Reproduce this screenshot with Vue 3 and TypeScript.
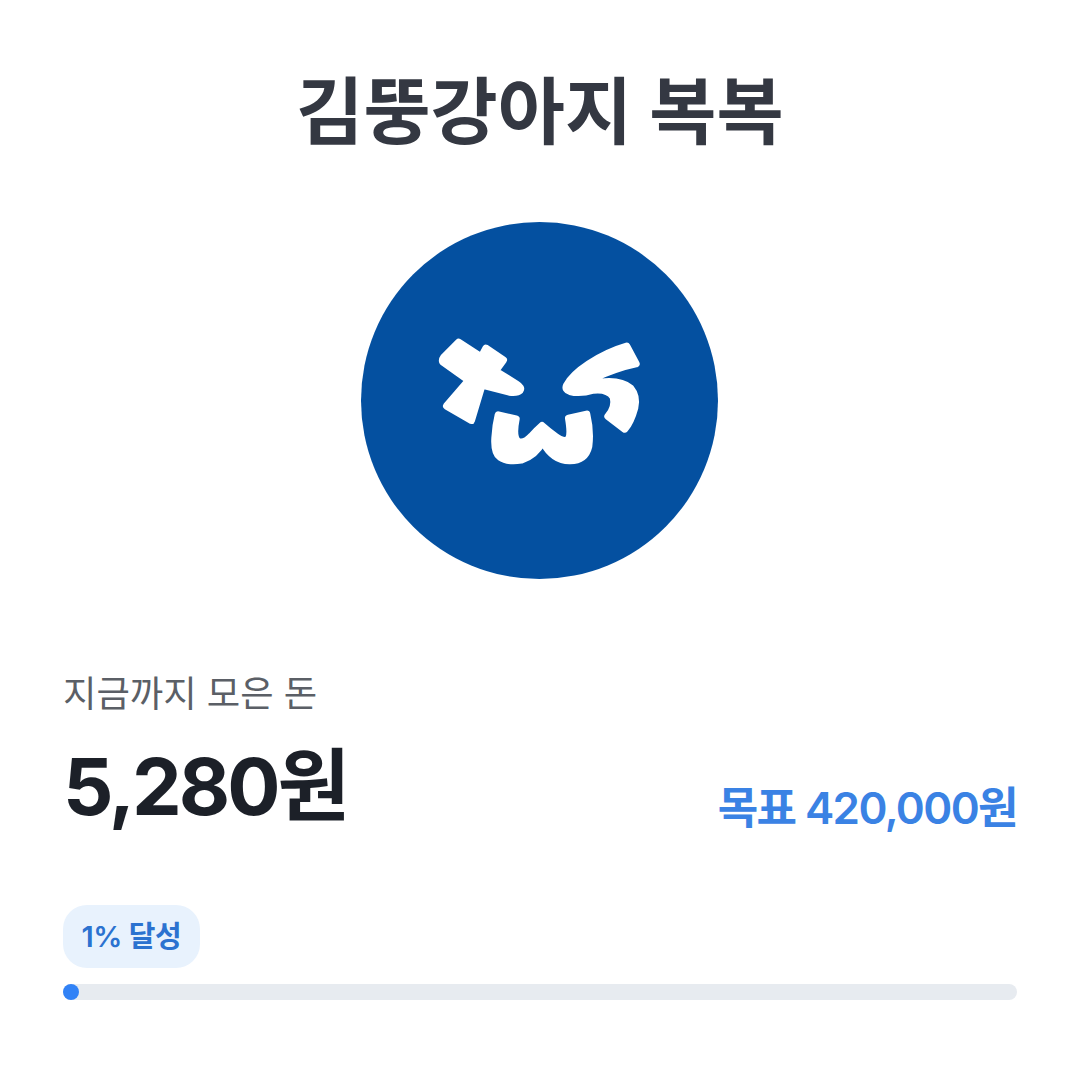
<script setup lang="ts">
import { computed } from 'vue'

const saved = 5280
const goal = 420000

const percent = computed(() => Math.max(Math.floor((saved / goal) * 100), 1))
const fillWidth = computed(() => `${Math.max(percent.value, 1.7)}%`)
const format = (n: number): string => n.toLocaleString('en-US')
</script>

<template>
  <main class="piggy">
    <h1 class="piggy__title">김뚱강아지 복복</h1>

    <div class="piggy__logo">
      <svg width="240" height="160" viewBox="0 0 720 480" aria-label="tws">
        <g fill="#fff" stroke="#fff" stroke-width="22" stroke-linejoin="round">
          <path d="M116 64 L184 108 L198 82 L250 117 L226 150 L290 190 Q306 200 300 208 Q292 216 268 213 L186 192 L154 298 L80 255 L146 178 L68 122 Q66 116 72 108 Z" />
          <path d="M235 282 L288 294 Q278 344 292 360 Q308 372 334 346 Q352 326 366 314 Q384 330 408 348 Q432 366 446 354 Q454 340 446 292 L500 280 Q512 330 506 376 Q496 418 450 419 Q400 420 368 362 Q346 404 304 417 Q262 424 240 408 Q222 396 225 350 Q227 314 235 282 Z" />
          <path d="M620 76 L648 128 Q590 140 520 172 Q520 186 540 184 Q602 176 632 202 Q652 226 644 260 Q632 304 614 324 L564 286 Q588 258 580 228 Q564 202 520 207 Q480 219 450 211 Q434 206 440 193 Q456 162 506 129 Q564 92 620 76 Z" />
        </g>
      </svg>
    </div>

    <section class="piggy__stats">
      <p class="piggy__label">지금까지 모은 돈</p>
      <div class="piggy__amounts">
        <strong class="piggy__saved">{{ format(saved) }}원</strong>
        <span class="piggy__goal">목표 {{ format(goal) }}원</span>
      </div>
    </section>

    <section class="piggy__progress">
      <span class="piggy__badge">{{ percent }}% 달성</span>
      <div class="piggy__track">
        <div class="piggy__fill" :style="{ width: fillWidth }"></div>
      </div>
    </section>
  </main>
</template>

<style>
html,
body {
  background: #fff;
}
</style>

<style scoped>
.piggy {
  box-sizing: border-box;
  width: 1080px;
  height: 1075px;
  padding: 66px 63px 0;
  background: #fff;
  font-family: Inter, "Noto Sans CJK KR", sans-serif;
}

.piggy__title {
  margin: 0;
  font-size: 73px;
  line-height: 92px;
  font-weight: 700;
  color: #343842;
  text-align: center;
}

.piggy__logo {
  display: flex;
  align-items: center;
  justify-content: center;
  width: 357px;
  height: 357px;
  margin: 64px 0 0 298px;
  border-radius: 50%;
  background: #0450a0;
}

.piggy__stats {
  margin-top: 90px;
}

.piggy__label {
  margin: 0;
  font-size: 36.3px;
  line-height: 50px;
  color: #5b5f66;
}

.piggy__amounts {
  display: flex;
  align-items: flex-end;
  justify-content: space-between;
  margin-top: 22px;
}

.piggy__saved {
  font-size: 79px;
  line-height: 90px;
  font-weight: 700;
  letter-spacing: -3px;
  color: #1c2028;
}

.piggy__goal {
  font-size: 44px;
  line-height: 46px;
  font-weight: 600;
  letter-spacing: -1.6px;
  color: #3a82e4;
}

.piggy__progress {
  margin-top: 74px;
}

.piggy__badge {
  display: inline-block;
  padding: 0 18.5px;
  height: 63px;
  line-height: 63px;
  border-radius: 24px;
  background: #e8f2fd;
  font-size: 29px;
  font-weight: 600;
  letter-spacing: -0.5px;
  color: #2b72d0;
}

.piggy__track {
  height: 16px;
  margin-top: 16px;
  border-radius: 8px;
  background: #e7ebf0;
}

.piggy__fill {
  height: 100%;
  border-radius: 8px;
  background: #3182f6;
}
</style>
